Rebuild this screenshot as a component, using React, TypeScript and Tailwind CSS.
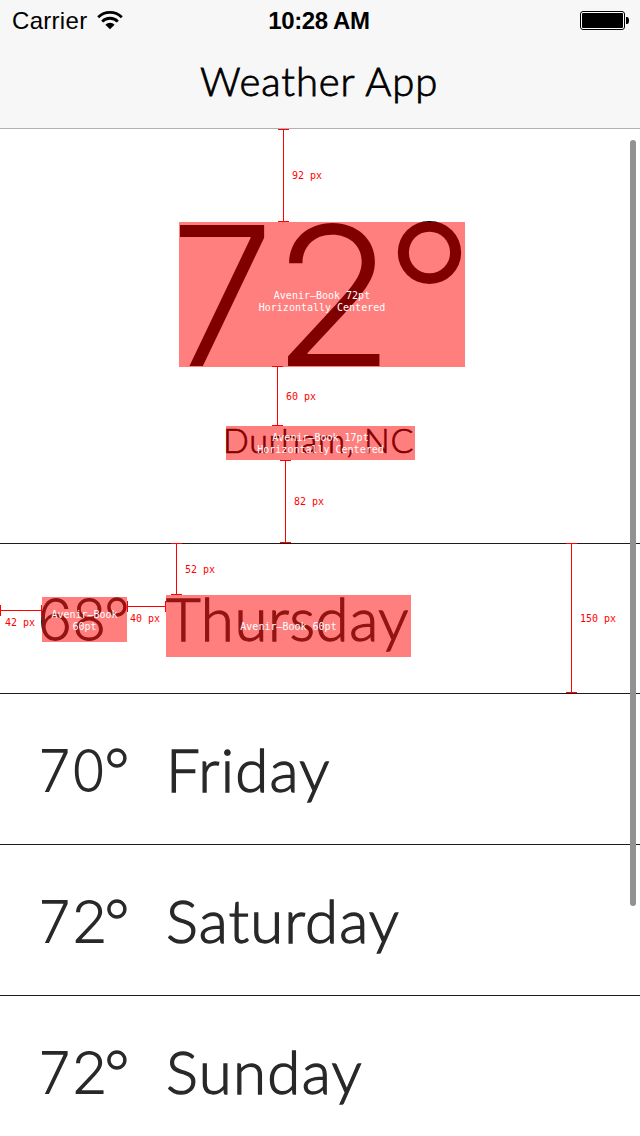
import type { ReactNode } from "react";
import clsx from "clsx";

const glyphText =
  "font-['Lato','Liberation_Sans',sans-serif] font-light whitespace-nowrap";

const digitScale: Record<string, string> = {
  "0": "scale-x-[0.93]",
  "2": "scale-x-[1.02]",
  "6": "scale-x-[0.98]",
  "7": "scale-x-[0.94]",
  "8": "scale-x-[0.94]",
};

function WifiIcon() {
  return (
    <svg viewBox="0 0 26 20" className="h-5 w-[26px]" fill="none" stroke="#000" strokeWidth="2.8">
      <path d="M1.2 7.2A16.8 16.8 0 0 1 24.8 7.2" />
      <path d="M5.2 11.6A10.8 10.8 0 0 1 20.8 11.6" />
      <path d="M13 19.2L8.4 14.7A6.2 6.2 0 0 1 17.6 14.7Z" fill="#000" stroke="none" />
    </svg>
  );
}

function BatteryIcon() {
  return (
    <svg viewBox="0 0 50 20" className="h-5 w-[50px]">
      <rect x="0.5" y="0.5" width="44" height="18" rx="2.5" fill="#fff" stroke="#000" />
      <rect x="2" y="2" width="41" height="15" rx="1" fill="#000" />
      <path d="M46 6h1a2 3.5 0 0 1 0 7h-1z" fill="#000" />
    </svg>
  );
}

function Temperature({ value, className, degreeClass }: { value: string; className?: string; degreeClass: string }) {
  return (
    <div className={clsx("flex whitespace-nowrap", className)}>
      {value.split("").map((ch, i) =>
        ch === "°" ? (
          <span key={i} className={clsx(glyphText, "flex w-[0.3667em] justify-center", degreeClass)}>
            {ch}
          </span>
        ) : (
          <span
            key={i}
            className="flex w-[0.5667em] justify-center font-['Inter','Liberation_Sans',sans-serif] font-[350] [-webkit-text-stroke:0px]"
          >
            <span className={clsx("translate-y-[0.027em] scale-y-[0.985]", digitScale[ch])}>{ch}</span>
          </span>
        ),
      )}
    </div>
  );
}

function VerticalGauge({ className, label, labelClass }: { className: string; label: string; labelClass: string }) {
  return (
    <div className={clsx("absolute z-10 flex w-[11px] flex-col items-center border-y border-[#f00]", className)}>
      <div className="w-px flex-1 bg-[#f00]" />
      <Note className={labelClass}>{label}</Note>
    </div>
  );
}

function HorizontalGauge({ className, label, labelClass }: { className: string; label: string; labelClass: string }) {
  return (
    <div className={clsx("absolute z-10 flex h-[11px] items-center border-x border-[#f00]", className)}>
      <div className="h-px flex-1 bg-[#f00]" />
      <Note className={labelClass}>{label}</Note>
    </div>
  );
}

function Note({ className, children }: { className: string; children: ReactNode }) {
  return (
    <span
      className={clsx(
        "absolute whitespace-nowrap font-['DejaVu_Sans_Mono',monospace] text-[10px] leading-3 text-[#f00]",
        className,
      )}
    >
      {children}
    </span>
  );
}

function Highlight({ className, lines }: { className: string; lines: string[] }) {
  return (
    <div
      className={clsx(
        "absolute z-10 flex flex-col items-center bg-[#ff0000]/50 font-['DejaVu_Sans_Mono',monospace] text-[10px] leading-3 whitespace-nowrap text-white",
        className,
      )}
    >
      {lines.map((line) => (
        <span key={line}>{line}</span>
      ))}
    </div>
  );
}

function DayRow({ temp, day, tracking, className, children }: {
  temp: string;
  day: string;
  tracking: string;
  className: string;
  children?: ReactNode;
}) {
  return (
    <div
      className={clsx(
        "relative flex shrink-0 border-t border-[#1c1c1c] pl-[38px] text-[60px] text-[#282828] [-webkit-text-stroke:1.3px_#282828]",
        className,
      )}
    >
      <Temperature value={temp} degreeClass="" />
      <div className={clsx(glyphText, "ml-[38px]", tracking)}>{day}</div>
      {children && <div className="[-webkit-text-stroke:0px]">{children}</div>}
    </div>
  );
}

export default function App() {
  return (
    <div className="relative flex h-[1136px] w-[640px] flex-col overflow-hidden bg-white text-black">
      <header className="flex h-[129px] shrink-0 flex-col border-b border-[#b2b2b2] bg-[#f7f7f7]">
        <div className="grid h-10 grid-cols-3 font-['Liberation_Sans',Arial,sans-serif] text-2xl leading-[42px]">
          <div className="flex pl-3">
            <span className="tracking-[0.3px]">Carrier</span>
            <div className="mt-[10px] ml-[10px]">
              <WifiIcon />
            </div>
          </div>
          <div className="pr-[2px] text-center font-bold tracking-[-0.4px]">10:28 AM</div>
          <div className="flex justify-end pt-[11px] pr-[10px]">
            <BatteryIcon />
          </div>
        </div>
        <h1
          className={clsx(
            glyphText,
            "pl-[200px] text-[40px] leading-[83px] tracking-[0.9px] [-webkit-text-stroke:0.8px_#000]",
          )}
        >
          Weather App
        </h1>
      </header>

      <main className="flex flex-col">
        <section className="relative flex h-[414px] shrink-0 flex-col">
          <Temperature
            value="72°"
            className="h-[290px] pt-[92px] pl-[166px] text-[197px] leading-[137px]"
            degreeClass="ml-1 [-webkit-text-stroke:4px_#000]"
          />
          <div
            className={clsx(
              glyphText,
              "pl-[223px] text-[34px] leading-[41px] tracking-[0.7px] [-webkit-text-stroke:0.7px_#000]",
            )}
          >
            Durham, NC
          </div>

          <VerticalGauge className="top-0 left-[278px] h-[93px]" label="92 px" labelClass="top-10 left-[14px]" />
          <Highlight
            className="top-[93px] left-[179px] h-[145px] w-[286px] pt-[68px]"
            lines={["Avenir–Book 72pt", "Horizontally Centered"]}
          />
          <VerticalGauge className="top-[237px] left-[272px] h-[60px]" label="60 px" labelClass="top-6 left-[14px]" />
          <Highlight
            className="top-[297px] left-[226px] h-[34px] w-[189px] pt-[6px]"
            lines={["Avenir–Book 17pt", "Horizontally Centered"]}
          />
          <VerticalGauge className="top-[331px] left-[280px] h-[83px]" label="82 px" labelClass="top-[35px] left-[14px]" />
        </section>

        <DayRow temp="68°" day="Thursday" tracking="tracking-[0.6px]" className="h-[150px] leading-[148px]">
          <HorizontalGauge className="top-[61px] left-0 w-[42px]" label="42 px" labelClass="top-3 left-1" />
          <Highlight className="top-[53px] left-[42px] h-[45px] w-[85px] pt-3" lines={["Avenir–Book", "60pt"]} />
          <HorizontalGauge className="top-[57px] left-[127px] w-[39px]" label="40 px" labelClass="top-3 left-[2px]" />
          <Highlight className="top-[51px] left-[166px] h-[62px] w-[245px] pt-[26px]" lines={["Avenir–Book 60pt"]} />
          <VerticalGauge className="-top-px left-[171px] h-[52px]" label="52 px" labelClass="top-5 left-[14px]" />
          <VerticalGauge className="-top-px left-[566px] h-[150px]" label="150 px" labelClass="top-[69px] left-[14px]" />
        </DayRow>
        <DayRow temp="70°" day="Friday" tracking="tracking-[1.2px]" className="h-[151px] leading-[150px]" />
        <DayRow temp="72°" day="Saturday" tracking="tracking-[1.1px]" className="h-[151px] leading-[150px]" />
        <DayRow temp="72°" day="Sunday" tracking="tracking-[1.3px]" className="h-[151px] leading-[150px]" />
      </main>

      <div className="absolute top-[140px] right-1 z-20 h-[766px] w-1.5 rounded-full bg-[#929292]" />
    </div>
  );
}
